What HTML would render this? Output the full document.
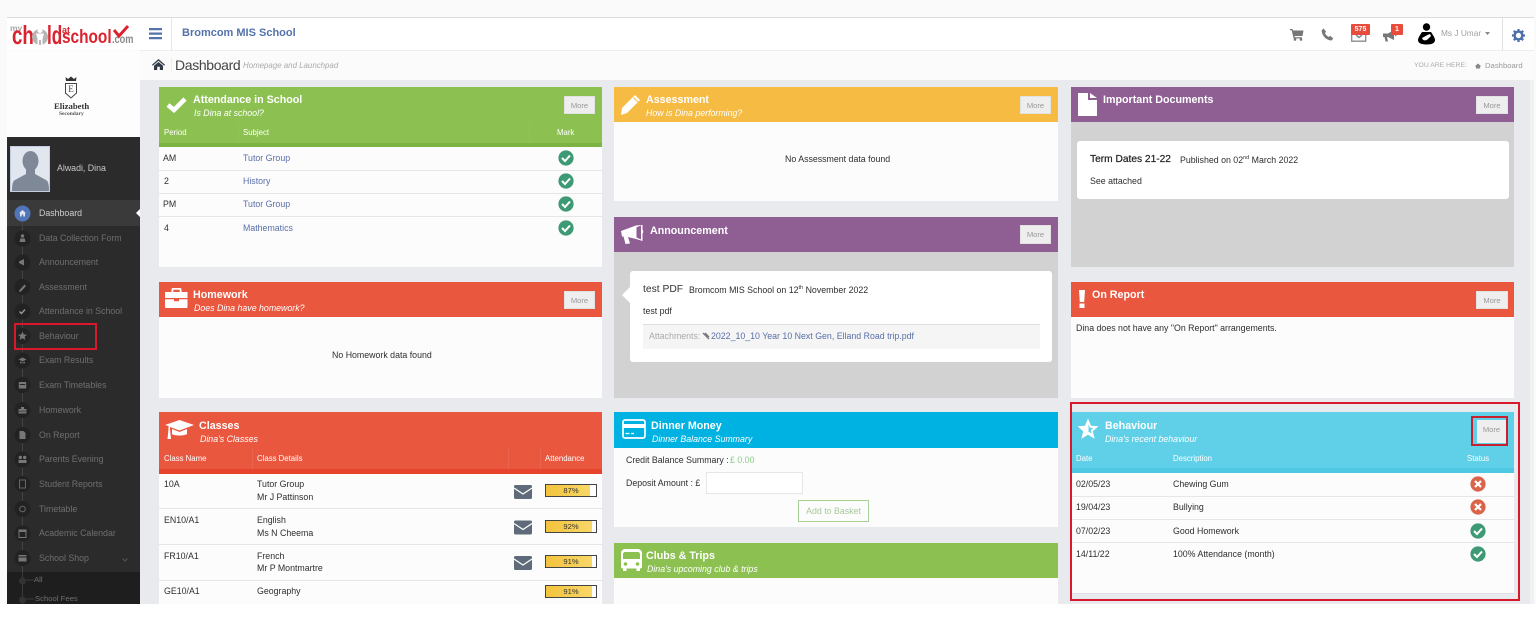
<!DOCTYPE html>
<html><head><meta charset="utf-8"><title>Dashboard</title>
<style>
html,body{margin:0;padding:0}
body{width:1536px;height:617px;overflow:hidden;position:relative;background:#fafafa;font-family:"Liberation Sans",Arial,sans-serif;font-size:8.8px;color:#2e2e2e;filter:blur(.3px)}
div,span.a,svg{position:absolute}
.t{position:absolute;white-space:nowrap;line-height:12px;height:12px}
.h{font-weight:bold;font-size:10.7px;color:#fff;margin-top:1px}
.s{font-style:italic;color:#fff}
.th{color:#fff;font-size:7.8px;margin-top:1px}
.more{background:#eee;color:#999;font-size:7.6px;text-align:center;line-height:18px;width:31px;height:18px;border:1px solid #e2e2e2;box-sizing:border-box}
.nav{color:#6f6f6f;left:39px}
.ln{height:1px;background:#e4e6e9}
.bar{left:545px;width:52px;height:13px;border:1px solid #444;box-sizing:border-box;text-align:center;line-height:11px;font-size:7.6px;background:#fff;color:#333}
.bar i{position:absolute;left:0;top:0;height:100%;background:linear-gradient(90deg,#f3c33c,#f8d768);z-index:0}
.bar b{position:relative;font-weight:normal;z-index:1}
.lk{color:#5a6fa8}
.lg{position:absolute;font-weight:bold;white-space:nowrap;transform-origin:0 0}
sup{font-size:5.5px;line-height:0}
</style></head><body>
<!-- frame -->
<div style="left:7px;top:17px;width:1527px;height:1px;background:#dcdcdc"></div>
<div style="left:7px;top:18px;width:1527px;height:32px;background:#fff"></div>
<div style="left:140px;top:50px;width:1394px;height:1px;background:#eee"></div>
<div style="left:7px;top:51px;width:133px;height:86px;background:#fdfdfd"></div>
<div style="left:140px;top:51px;width:1394px;height:29px;background:#fbfbfb"></div>
<div style="left:140px;top:80px;width:1390px;height:524px;background:#e8eaed"></div>
<div style="left:7px;top:137px;width:133px;height:467px;background:#2b2b2b"></div>
<div style="left:1530px;top:80px;width:4px;height:524px;background:#f1f1f1"></div>
<div style="left:0;top:604px;width:1536px;height:13px;background:#fff"></div>

<!-- logo -->
<span class="lg" style="left:10px;top:23px;font-size:8.5px;line-height:10px;color:#a5a5a5">my</span>
<span class="lg" style="left:12px;top:22px;font-size:26px;line-height:26px;color:#d9232e;transform:scaleX(.72)">ch</span>
<svg style="left:32px;top:26px" width="17" height="20" viewBox="0 0 17 20"><circle cx="8" cy="11" r="8" fill="#b5b5b5"/><circle cx="8" cy="4.500" r="2.500" fill="#fff"/><path d="M4 7.500h8l-1.500 5.500v6H9v-5H7v5H5.500v-6z" fill="#fff"/></svg>
<span class="lg" style="left:47px;top:22px;font-size:26px;line-height:26px;color:#d9232e;transform:scaleX(.66)">ld</span>
<span class="lg" style="left:62px;top:25px;font-size:9px;line-height:10px;color:#d9232e">at</span>
<span class="lg" style="left:62px;top:28px;font-size:19px;line-height:19px;color:#d9232e;transform:scaleX(.81)">school</span>
<span class="lg" style="left:112px;top:34px;font-size:11.500px;line-height:12px;color:#8a8a8a;transform:scaleX(.8)">.com</span>
<svg style="left:112px;top:24px" width="18" height="15" viewBox="0 0 18 15"><path d="M2 6l5 6L16 2" fill="none" stroke="#d9232e" stroke-width="3"/></svg>

<!-- top bar -->
<svg style="left:149px;top:28px" width="14" height="12" viewBox="0 0 14 12"><path d="M0 0h13v2.200H0zM0 4.500h13v2.200H0zM0 9h13v2.200H0z" fill="#5472ab"/></svg>
<div style="left:171px;top:18px;width:1px;height:32px;background:#e6e6e6"></div>
<span class="t" style="left:182px;top:27px;margin-top:0;font-weight:bold;font-size:11px;color:#5472ab">Bromcom MIS School</span>

<svg style="left:1290px;top:28px" width="14" height="13" viewBox="0 0 14 13"><path d="M0 1h2.500l.5 1.500h10.500L12.500 8H4.500l.3 1.300H12v1.200H3.600L1.700 2.200H0z" fill="#777"/><circle cx="5" cy="11.500" r="1.300" fill="#777"/><circle cx="11" cy="11.500" r="1.300" fill="#777"/></svg>
<svg style="left:1321px;top:28px" width="13" height="13" viewBox="0 0 13 13"><path d="M2.500 0.500L5 3.500 4 5.300c.8 1.600 2 2.800 3.500 3.600l1.800-1L12.300 10.500 10.500 12.500C5 12.500.5 7 .7 2.300z" fill="#777"/></svg>
<svg style="left:1351px;top:31px" width="16" height="11" viewBox="0 0 16 11"><path d="M.7.700h14v9.500H.7z" fill="none" stroke="#8a8a8a" stroke-width="1.300"/><path d="M5 4l3 2.500L11 4" stroke="#8a8a8a" fill="none" stroke-width="1.500"/></svg>
<div style="left:1351px;top:24px;width:19px;height:11px;background:#e74c3c;border-radius:1px;color:#fff;font-size:7px;font-weight:bold;text-align:center;line-height:11px">575</div>
<svg style="left:1383px;top:30px" width="15" height="12" viewBox="0 0 15 12"><path d="M0 3.500h5L11 0v10L5 7H4l1 4.500H2.500L1.500 7H0z" fill="#777"/><path d="M12 3.500l2 1.500-2 1.500z" fill="#777"/></svg>
<div style="left:1391px;top:24px;width:12px;height:11px;background:#e74c3c;border-radius:1px;color:#fff;font-size:7px;font-weight:bold;text-align:center;line-height:11px">1</div>
<svg style="left:1417px;top:23px" width="19" height="22" viewBox="0 0 19 22"><circle cx="9.500" cy="4" r="3.700" fill="#000"/><path d="M5 9h9c2 3 4 6 4 8 0 3-3 4.500-8 4.500S1 20.500 1 17c0-2 2-5 4-8z" fill="#000"/><path d="M5 15c2-1 5-3 8-4l1 2-3 3c-2 2-5 2-6-1z" fill="#fff"/></svg>
<span class="t" style="left:1441px;top:27px;font-size:8.300px;color:#a0a0a0">Ms J Umar</span>
<svg style="left:1485px;top:32px" width="5" height="3" viewBox="0 0 5 3"><path d="M0 0h5L2.500 3z" fill="#888"/></svg>
<div style="left:1502px;top:18px;width:1px;height:32px;background:#e2e2e2"></div>
<svg style="left:1512px;top:29px" width="13" height="13" viewBox="0 0 13 13"><circle cx="6.500" cy="6.500" r="3.900" fill="none" stroke="#4a6fa9" stroke-width="2.400"/><g stroke="#4a6fa9" stroke-width="2.200"><path d="M6.500 0v3M6.500 10v3M0 6.500h3M10 6.500h3M1.800 1.800l2 2M9.200 9.200l2 2M1.800 11.200l2-2M9.200 3.800l2-2"/></g></svg>

<!-- breadcrumb -->
<svg style="left:152px;top:59px" width="13" height="11" viewBox="0 0 13 11"><path d="M6.500 0L13 5.800l-.8.900L6.500 1.700.8 6.700 0 5.800z M2 6.800L6.500 3 11 6.800V11H7.800V7.700H5.200V11H2z" fill="#2f3a44"/></svg>
<div style="left:171px;top:58px;width:1px;height:14px;background:#eee"></div>
<span class="t" style="left:175px;top:59px;font-size:14px;letter-spacing:-.35px;color:#444">Dashboard</span>
<span class="t" style="left:243px;top:60px;font-size:7.900px;font-style:italic;color:#aaa">Homepage and Launchpad</span>
<span class="t" style="left:1414px;top:60px;font-size:6.800px;color:#aaa">YOU ARE HERE:</span>
<svg style="left:1475px;top:63px" width="6" height="6" viewBox="0 0 13 11"><path d="M6.500 0L13 5.800 11 7v4H2V7L0 5.800z" fill="#888"/></svg>
<span class="t" style="left:1485px;top:60px;font-size:7.700px;color:#999">Dashboard</span>

<!-- school crest -->
<svg style="left:63px;top:76px" width="16" height="24" viewBox="0 0 16 24"><path d="M3 5L2.500 1l2.500 2L8 .5 11 3l2.500-2L13 5z" fill="#333"/><path d="M2.500 7.500h11V17L8 22 2.500 17z" fill="#fff" stroke="#444" stroke-width="1"/><text x="8" y="16" text-anchor="middle" font-family="Liberation Serif" font-size="9" fill="#444">E</text></svg>
<span class="t" style="left:54px;top:100px;font:bold 8.700px/12px 'Liberation Serif';color:#333">Elizabeth</span>
<span class="t" style="left:59px;top:108px;font:bold 5.500px/12px 'Liberation Serif';color:#555">Secondary</span>

<!-- profile -->
<div style="left:10px;top:146px;width:40px;height:46px;background:#e2e6ef;border:1px solid #c2cde0;box-sizing:border-box;overflow:hidden">
<svg style="left:0;top:0" width="38" height="44" viewBox="0 0 38 44"><ellipse cx="19.500" cy="14" rx="8" ry="10" fill="#7e8897"/><path d="M15 22h9v5l11 6c2 1 3 4 3 11H1c0-7 1-10 3-11l11-6z" fill="#7e8897"/></svg></div>
<span class="t" style="left:57px;top:162px;color:#c8c8c8">Alwadi, Dina</span>

<!-- sidebar nav -->
<div style="left:7px;top:200px;width:133px;height:26px;background:#3a3a3a"></div>
<div style="left:22px;top:205px;width:1px;height:375px;background:#444"></div>
<svg style="left:136px;top:209px" width="4" height="8" viewBox="0 0 4 8"><path d="M4 0v8L0 4z" fill="#fff"/></svg>
<svg style="left:14px;top:205px" width="17" height="17" viewBox="0 0 17 17"><circle cx="8.500" cy="8.500" r="8" fill="#5274b8"/><path d="M8.500 5L12 8.200h-1V11.500H9.300V9.500H7.700v2H6V8.200H5z" fill="#dfe6f2"/></svg>
<svg style="left:14px;top:230px" width="17" height="375" viewBox="0 0 17 375" fill="#222">
<circle cx="8.500" cy="8.500" r="8"/><circle cx="8.500" cy="32.500" r="8"/><circle cx="8.500" cy="57" r="8"/><circle cx="8.500" cy="81.500" r="8"/><circle cx="8.500" cy="106" r="8"/><circle cx="8.500" cy="130.500" r="8"/><circle cx="8.500" cy="155" r="8"/><circle cx="8.500" cy="180" r="8"/><circle cx="8.500" cy="205" r="8"/><circle cx="8.500" cy="229.500" r="8"/><circle cx="8.500" cy="254" r="8"/><circle cx="8.500" cy="279" r="8"/><circle cx="8.500" cy="303.500" r="8"/><circle cx="8.500" cy="328" r="8"/>
<g fill="#777">
<circle cx="8.500" cy="6" r="1.700"/><path d="M5.500 12l.8-3.500h4.400l.8 3.500z"/>
<path d="M5 31.500l5-2.500v6.500l-5-2.500z"/>
<path d="M5.500 60l5-5.500 1.500 1.500-5 5.500-2 .5z"/>
<path d="M5.500 81.500l2 2 3.500-4" fill="none" stroke="#999" stroke-width="1.400"/>
<path d="M8.500 101.500l1.300 3 3.300.2-2.500 2 .8 3.200-2.900-1.700-2.900 1.700.8-3.200-2.500-2 3.300-.2z"/>
<path d="M4.500 129.500l4-2 4 2-4 2zM6 131.500l2.500 1.200 2.500-1.200v1.800H6z"/>
<path d="M4.800 152h7.400v6.500H4.800z"/><path d="M5.800 154h5.400v1H5.800z" fill="#222"/>
<path d="M4.500 179h8v4.500h-8zM7 177h3v2H7z"/><path d="M4.500 180.800h8v.6h-8z" fill="#222"/>
<path d="M5.500 201h4l2 2v6h-6z"/>
<circle cx="6.300" cy="227.500" r="1.700"/><circle cx="10.700" cy="227.500" r="1.700"/><path d="M4.500 230h8v3h-8z"/>
<path d="M5.500 250h6v8h-6z" fill="none" stroke="#666"/>
<circle cx="8.500" cy="279" r="2.800" fill="none" stroke="#666"/>
<path d="M5 300h7v7.500H5z" fill="none" stroke="#777"/><path d="M5 300h7v2H5z"/>
<path d="M4.500 325h8v6.500h-8z"/><path d="M4.500 326.500h8v1h-8z" fill="#222"/>
</g>
<circle cx="8.500" cy="350" r="3.500" fill="#333"/><circle cx="8.500" cy="369" r="3.500" fill="#333"/></svg>
<span class="t" style="left:39px;top:207px;color:#cfcfcf">Dashboard</span>
<span class="t nav" style="top:232px">Data Collection Form</span>
<span class="t nav" style="top:256px">Announcement</span>
<span class="t nav" style="top:281px">Assessment</span>
<span class="t nav" style="top:305px">Attendance in School</span>
<span class="t nav" style="top:330px">Behaviour</span>
<span class="t nav" style="top:354px">Exam Results</span>
<span class="t nav" style="top:379px">Exam Timetables</span>
<span class="t nav" style="top:404px">Homework</span>
<span class="t nav" style="top:429px">On Report</span>
<span class="t nav" style="top:453px">Parents Evening</span>
<span class="t nav" style="top:478px">Student Reports</span>
<span class="t nav" style="top:503px">Timetable</span>
<span class="t nav" style="top:527px">Academic Calendar</span>
<span class="t nav" style="top:552px">School Shop</span>
<svg style="left:122px;top:558px" width="6" height="4" viewBox="0 0 6 4"><path d="M.5.500L3 3 5.500.500" stroke="#555" fill="none"/></svg>
<div style="left:7px;top:572px;width:133px;height:32px;background:#1e1e1e"></div>
<div style="left:22px;top:572px;width:1px;height:32px;background:#3a3a3a"></div>
<svg style="left:18px;top:576px" width="18" height="28" viewBox="0 0 18 28"><circle cx="4.500" cy="5" r="3.500" fill="#333"/><circle cx="4.500" cy="24" r="3.500" fill="#333"/><path d="M8 4h8M8 23h8" stroke="#3a3a3a"/></svg>
<span class="t" style="left:34px;top:574px;font-size:7.700px;color:#6f6f6f">All</span>
<span class="t" style="left:35px;top:593px;font-size:7.700px;color:#6f6f6f">School Fees</span>
<div style="left:14px;top:323px;width:83px;height:27px;border:2px solid #d9182b;box-sizing:border-box"></div>

<!-- ATTENDANCE -->
<div style="left:159px;top:87px;width:443px;height:180px;background:#fcfcfc"></div>
<div style="left:159px;top:87px;width:443px;height:56px;background:#8cc152"></div>
<div style="left:159px;top:143px;width:443px;height:4px;background:#7cb342"></div>
<svg style="left:166px;top:96px" width="21" height="17" viewBox="0 0 21 17"><path d="M2 9l6 5L19 3" fill="none" stroke="#fff" stroke-width="4.500"/></svg>
<span class="t h" style="left:193px;top:93px">Attendance in School</span>
<span class="t s" style="left:194px;top:107px">Is Dina at school?</span>
<div class="more" style="left:564px;top:96px">More</div>
<span class="t th" style="left:164px;top:126px">Period</span>
<span class="t th" style="left:243px;top:126px">Subject</span>
<span class="t th" style="left:557px;top:126px">Mark</span>
<div style="left:238px;top:123px;width:1px;height:20px;background:#91c459"></div>
<div style="left:529px;top:123px;width:1px;height:20px;background:#91c459"></div>
<span class="t" style="left:163px;top:152px">AM</span><span class="t lk" style="left:243px;top:152px">Tutor Group</span>
<div class="ln" style="left:159px;top:170px;width:443px"></div>
<span class="t" style="left:164px;top:175px">2</span><span class="t lk" style="left:243px;top:175px">History</span>
<div class="ln" style="left:159px;top:193px;width:443px"></div>
<span class="t" style="left:163px;top:198px">PM</span><span class="t lk" style="left:243px;top:198px">Tutor Group</span>
<div class="ln" style="left:159px;top:216px;width:443px"></div>
<span class="t" style="left:164px;top:222px">4</span><span class="t lk" style="left:243px;top:222px">Mathematics</span>
<svg style="left:558px;top:150px" width="16" height="86" viewBox="0 0 16 86"><g fill="#3d9a74"><circle cx="8" cy="8" r="7.600"/><circle cx="8" cy="31" r="7.600"/><circle cx="8" cy="54" r="7.600"/><circle cx="8" cy="78" r="7.600"/></g><g fill="none" stroke="#fff" stroke-width="2"><path d="M4 8l3 3 5-5.500M4 31l3 3 5-5.500M4 54l3 3 5-5.500M4 78l3 3 5-5.500"/></g></svg>

<!-- HOMEWORK -->
<div style="left:159px;top:282px;width:443px;height:116px;background:#fcfcfc"></div>
<div style="left:159px;top:282px;width:443px;height:35px;background:#e9573f"></div>
<svg style="left:165px;top:288px" width="23" height="20" viewBox="0 0 23 20"><path d="M8 0h7c1 0 1.500.5 1.500 1.500V4H22.500v6H0V4H6.500V1.500C6.500.500 7 0 8 0zM8.300 1.700V4h6.400V1.700z M0 11.300h9v2h5v-2h8.500V19c0 .5-.5 1-1 1h-20.500c-.500 0-1-.5-1-1z" fill="#fff"/></svg>
<span class="t h" style="left:193px;top:288px">Homework</span>
<span class="t s" style="left:194px;top:302px">Does Dina have homework?</span>
<div class="more" style="left:564px;top:291px">More</div>
<span class="t" style="left:332px;top:349px">No Homework data found</span>

<!-- CLASSES -->
<div style="left:159px;top:412px;width:443px;height:192px;background:#fcfcfc"></div>
<div style="left:159px;top:412px;width:443px;height:57px;background:#e9573f"></div>
<div style="left:159px;top:469px;width:443px;height:5px;background:#e8432c"></div>
<svg style="left:165px;top:420px" width="29" height="20" viewBox="0 0 29 20"><path d="M14.500 0L29 5 14.500 10.500 5 7v2.500l1 9.500H2.500L3.500 9V6L0 5z" fill="#fff"/><path d="M7 9l7.500 3L22 9v5c-2 2-13 2-15 0z" fill="#fff"/></svg>
<span class="t h" style="left:199px;top:419px">Classes</span>
<span class="t s" style="left:200px;top:433px">Dina's Classes</span>
<span class="t th" style="left:164px;top:452px">Class Name</span>
<span class="t th" style="left:257px;top:452px">Class Details</span>
<span class="t th" style="left:545px;top:452px">Attendance</span>
<div style="left:252px;top:448px;width:1px;height:21px;background:#eb6450"></div>
<div style="left:508px;top:448px;width:1px;height:21px;background:#eb6450"></div>
<div style="left:540px;top:448px;width:1px;height:21px;background:#eb6450"></div>
<span class="t" style="left:164px;top:478px">10A</span><span class="t" style="left:257px;top:478px">Tutor Group</span><span class="t" style="left:257px;top:491px">Mr J Pattinson</span>
<div class="ln" style="left:159px;top:508px;width:443px"></div>
<span class="t" style="left:164px;top:514px">EN10/A1</span><span class="t" style="left:257px;top:514px">English</span><span class="t" style="left:257px;top:527px">Ms N Cheema</span>
<div class="ln" style="left:159px;top:544px;width:443px"></div>
<span class="t" style="left:164px;top:550px">FR10/A1</span><span class="t" style="left:257px;top:550px">French</span><span class="t" style="left:257px;top:562px">Mr P Montmartre</span>
<div class="ln" style="left:159px;top:580px;width:443px"></div>
<span class="t" style="left:164px;top:585px">GE10/A1</span><span class="t" style="left:257px;top:585px">Geography</span>
<svg style="left:514px;top:485px" width="18" height="86" viewBox="0 0 18 86"><g fill="#5f6b7a"><rect y="0" width="18" height="14" rx="1.500"/><rect y="35.500" width="18" height="14" rx="1.500"/><rect y="71" width="18" height="14" rx="1.500"/></g><g fill="none" stroke="#fff" stroke-width="1.200"><path d="M0 3l9 6 9-6M0 38.500l9 6 9-6M0 74l9 6 9-6"/></g></svg>
<div class="bar" style="top:484px"><i style="width:87%"></i><b>87%</b></div>
<div class="bar" style="top:520px"><i style="width:92%"></i><b>92%</b></div>
<div class="bar" style="top:555px"><i style="width:91%"></i><b>91%</b></div>
<div class="bar" style="top:585px"><i style="width:91%"></i><b>91%</b></div>

<!-- ASSESSMENT -->
<div style="left:614px;top:87px;width:444px;height:114px;background:#fcfcfc"></div>
<div style="left:614px;top:87px;width:444px;height:35px;background:#f6bb42"></div>
<svg style="left:621px;top:94px" width="20" height="21" viewBox="0 0 20 21"><path d="M14 1l5 5L6 19l-6 2 1-7z" fill="#fff"/><path d="M12.500 3.500l4.500 4.500" stroke="#f6bb42"/></svg>
<span class="t h" style="left:646px;top:93px">Assessment</span>
<span class="t s" style="left:646px;top:107px">How is Dina performing?</span>
<div class="more" style="left:1020px;top:96px">More</div>
<span class="t" style="left:785px;top:153px">No Assessment data found</span>

<!-- ANNOUNCEMENT -->
<div style="left:614px;top:217px;width:444px;height:181px;background:#d2d2d2"></div>
<div style="left:614px;top:217px;width:444px;height:35px;background:#8f5e93"></div>
<svg style="left:621px;top:224px" width="23" height="21" viewBox="0 0 23 21"><path d="M0 7l15-5.500L21.500 1v16L15 15l-8-2 2 6.500L4.500 20 2.500 12.500H1z" fill="#fff"/><path d="M15.500 3.200l4.500-1.700v14l-4.500-2z" fill="#8f5e93"/><path d="M21 5.500c1.500.5 1.800 3.500 0 4.500z" fill="#fff"/></svg>
<span class="t h" style="left:650px;top:224px">Announcement</span>
<div class="more" style="left:1020px;top:225px;height:19px">More</div>
<div style="left:630px;top:271px;width:422px;height:91px;background:#fff;border-radius:3px"></div>
<svg style="left:622px;top:287px" width="8" height="16" viewBox="0 0 8 16"><path d="M8 0v16L0 8z" fill="#fff"/></svg>
<span class="t" style="left:643px;top:284px;font-size:10.300px;color:#333">test PDF</span>
<span class="t" style="left:689px;top:284px">Bromcom MIS School on 12<sup>th</sup> November 2022</span>
<span class="t" style="left:643px;top:305px">test pdf</span>
<div style="left:643px;top:324px;width:397px;height:25px;background:#f5f5f5;border-top:1px solid #ddd;box-sizing:border-box"></div>
<span class="t" style="left:649px;top:330px;color:#aaa">Attachments:</span>
<svg style="left:702px;top:332px" width="8" height="9" viewBox="0 0 8 9"><path d="M1 1l6 6M3 1l4 4" stroke="#777" fill="none" stroke-width="1.300"/></svg>
<span class="t lk" style="left:711px;top:330px">2022_10_10 Year 10 Next Gen, Elland Road trip.pdf</span>

<!-- DINNER -->
<div style="left:614px;top:412px;width:444px;height:115px;background:#fcfcfc"></div>
<div style="left:614px;top:412px;width:444px;height:36px;background:#00b2e2"></div>
<svg style="left:622px;top:419px" width="24" height="20" viewBox="0 0 24 20"><rect x="1" y="1" width="22" height="18" rx="2" fill="none" stroke="#fff" stroke-width="1.700"/><path d="M1 5h22v4H1z" fill="#fff"/><path d="M3.500 14.500h4M9 14.500h3" stroke="#fff" stroke-width="1.300"/></svg>
<span class="t h" style="left:651px;top:419px">Dinner Money</span>
<span class="t s" style="left:652px;top:433px">Dinner Balance Summary</span>
<span class="t" style="left:626px;top:454px">Credit Balance Summary :</span>
<span class="t" style="left:730px;top:454px;color:#8cc98a">£ 0.00</span>
<span class="t" style="left:626px;top:477px">Deposit Amount : £</span>
<div style="left:706px;top:472px;width:97px;height:22px;background:#fff;border:1px solid #e6e6e6;box-sizing:border-box"></div>
<div style="left:798px;top:500px;width:71px;height:22px;border:1px solid #a8d198;box-sizing:border-box;color:#a8c99a;text-align:center;line-height:20px">Add to Basket</div>

<!-- CLUBS -->
<div style="left:614px;top:543px;width:444px;height:61px;background:#fcfcfc"></div>
<div style="left:614px;top:543px;width:444px;height:35px;background:#8cc152"></div>
<svg style="left:621px;top:549px" width="21" height="23" viewBox="0 0 21 23"><path d="M4 0h13c2 0 4 2 4 4v14c0 1-1 1.500-2 1.500V22h-3.500v-2.500h-10V22H2v-2.500C1 19.500 0 19 0 18V4c0-2 2-4 4-4z" fill="#fff"/><path d="M4 3h13c1 0 2 1 2 2v5H2V5c0-1 1-2 2-2z" fill="#8cc152"/><circle cx="4.500" cy="15" r="1.800" fill="#8cc152"/><circle cx="16.500" cy="15" r="1.800" fill="#8cc152"/></svg>
<span class="t h" style="left:646px;top:549px">Clubs &amp; Trips</span>
<span class="t s" style="left:647px;top:563px">Dina's upcoming club &amp; trips</span>

<!-- DOCUMENTS -->
<div style="left:1071px;top:87px;width:443px;height:180px;background:#d2d2d2"></div>
<div style="left:1071px;top:87px;width:443px;height:35px;background:#8f5e93"></div>
<svg style="left:1078px;top:93px" width="19" height="23" viewBox="0 0 19 23"><path d="M0 0h10v7h9v16H0z" fill="#fff"/><path d="M12 0l7 5h-7z" fill="#fff"/></svg>
<span class="t h" style="left:1103px;top:93px">Important Documents</span>
<div class="more" style="left:1476px;top:96px;width:32px">More</div>
<div style="left:1077px;top:141px;width:432px;height:58px;background:#fff;border-radius:3px"></div>
<span class="t" style="left:1090px;top:154px;font-size:10.200px;color:#222;-webkit-text-stroke:.2px #222">Term Dates 21-22</span>
<span class="t" style="left:1180px;top:154px">Published on 02<sup>nd</sup> March 2022</span>
<span class="t" style="left:1090px;top:175px">See attached</span>

<!-- ON REPORT -->
<div style="left:1071px;top:282px;width:443px;height:116px;background:#fcfcfc"></div>
<div style="left:1071px;top:282px;width:443px;height:35px;background:#e9573f"></div>
<svg style="left:1079px;top:290px" width="6" height="18" viewBox="0 0 6 18"><path d="M0 0h6L5.200 12H.8zM.5 13.500h5V18h-5z" fill="#fff"/></svg>
<span class="t h" style="left:1092px;top:288px">On Report</span>
<div class="more" style="left:1476px;top:291px;width:32px">More</div>
<span class="t" style="left:1076px;top:322px">Dina does not have any "On Report" arrangements.</span>

<!-- BEHAVIOUR -->
<div style="left:1071px;top:412px;width:443px;height:181px;background:#fcfcfc"></div>
<div style="left:1071px;top:593px;width:443px;height:1px;background:#dedfe2"></div>
<div style="left:1072px;top:412px;width:442px;height:56px;background:#5fd0e8"></div>
<div style="left:1072px;top:468px;width:442px;height:5px;background:#4fc8e4"></div>
<svg style="left:1077px;top:418px" width="22" height="21" viewBox="0 0 22 21"><path d="M11 .5l3 7.200 7.500.6-5.700 5 1.800 7.500L11 16.800 4.400 20.800l1.800-7.500L.5 8.300 8 7.700z" fill="#fff"/><path d="M11.500 6.500l1.500 3.200 3.300.3-2.500 2.200.8 3.200-3.100-1.700z" fill="#5fd0e8"/></svg>
<span class="t h" style="left:1105px;top:419px">Behaviour</span>
<span class="t s" style="left:1105px;top:433px">Dina's recent behaviour</span>
<div class="more" style="left:1477px;top:420px;width:29px;height:23px;line-height:19px;border:0">More</div>
<span class="t th" style="left:1076px;top:452px">Date</span>
<span class="t th" style="left:1173px;top:452px">Description</span>
<span class="t th" style="left:1467px;top:452px">Status</span>
<span class="t" style="left:1076px;top:478px">02/05/23</span><span class="t" style="left:1173px;top:478px">Chewing Gum</span>
<div class="ln" style="left:1072px;top:496px;width:442px"></div>
<span class="t" style="left:1076px;top:501px">19/04/23</span><span class="t" style="left:1173px;top:501px">Bullying</span>
<div class="ln" style="left:1072px;top:519px;width:442px"></div>
<span class="t" style="left:1076px;top:525px">07/02/23</span><span class="t" style="left:1173px;top:525px">Good Homework</span>
<div class="ln" style="left:1072px;top:542px;width:442px"></div>
<span class="t" style="left:1076px;top:548px">14/11/22</span><span class="t" style="left:1173px;top:548px">100% Attendance (month)</span>
<svg style="left:1470px;top:476px" width="16" height="86" viewBox="0 0 16 86"><circle cx="8" cy="8" r="7.600" fill="#d9644a"/><circle cx="8" cy="31" r="7.600" fill="#d9644a"/><circle cx="8" cy="55" r="7.600" fill="#3d9a74"/><circle cx="8" cy="78" r="7.600" fill="#3d9a74"/><g fill="none" stroke="#fff" stroke-width="2.200"><path d="M5 5l6 6M11 5l-6 6M5 28l6 6M11 28l-6 6"/><path stroke-width="2" d="M4 55l3 3 5-5.500M4 78l3 3 5-5.500"/></g></svg>

<!-- annotations -->
<div style="left:1070px;top:402px;width:450px;height:199px;border:2px solid #d9182b;box-sizing:border-box"></div>
<div style="left:1471px;top:416px;width:37px;height:30px;border:2px solid #c8202e;box-sizing:border-box"></div>
</body></html>
